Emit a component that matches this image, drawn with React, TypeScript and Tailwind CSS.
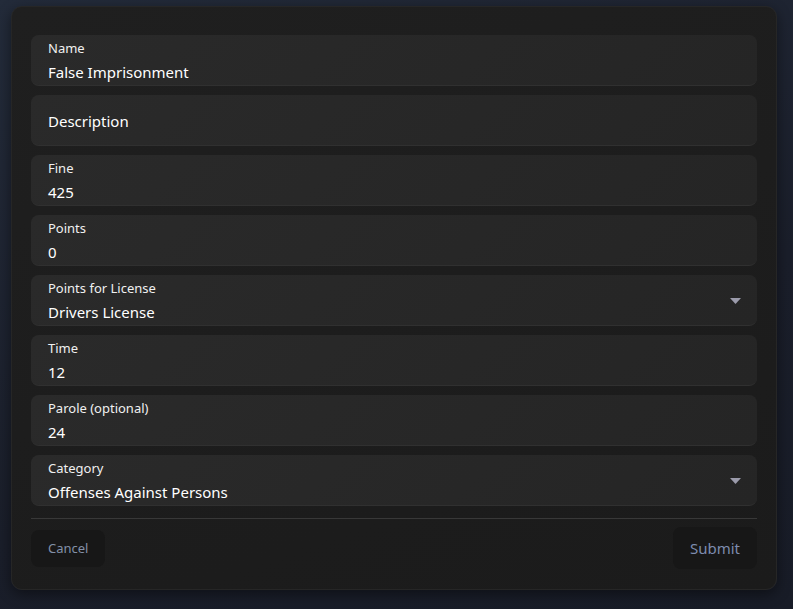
import React from "react";

interface FieldProps {
  label?: string;
  value: string;
  select?: boolean;
}

function Field({ label, value, select }: FieldProps) {
  return (
    <div
      className={`relative h-[51px] rounded-lg bg-[linear-gradient(135deg,#2a2a2a,#252525)] border-b border-[#303030] pl-[17px] pr-4 flex flex-col ${
        label ? "pt-[4px]" : "justify-center"
      }`}
    >
      {label && <div className="text-[13px] leading-[18px] text-[#f0f0f0]">{label}</div>}
      <div className={`text-[15px] leading-[22px] text-white ${label ? "mt-[4px]" : "mt-[1px]"}`}>{value}</div>
      {select && (
        <svg className="absolute right-[16px] top-[23px]" width="11" height="6" viewBox="0 0 11 6">
          <path d="M0 0h11L5.5 6z" fill="#9b9bab" />
        </svg>
      )}
    </div>
  );
}

const fields: FieldProps[] = [
  { label: "Name", value: "False Imprisonment" },
  { value: "Description" },
  { label: "Fine", value: "425" },
  { label: "Points", value: "0" },
  { label: "Points for License", value: "Drivers License", select: true },
  { label: "Time", value: "12" },
  { label: "Parole (optional)", value: "24" },
  { label: "Category", value: "Offenses Against Persons", select: true },
];

export default function App() {
  return (
    <div
      className="w-[793px] h-[609px] overflow-hidden bg-[linear-gradient(160deg,#232b3a,#1a1e2a_60%,#181c27)] pt-[6px] pl-[11px]"
      style={{ fontFamily: '"Noto Sans", "Open Sans", sans-serif' }}
    >
      <div className="w-[766px] h-[584px] rounded-[11px] border border-[#262626] bg-[linear-gradient(160deg,#1f1f1f,#1b1b1b)] shadow-[0_4px_14px_rgba(0,0,0,0.45)] px-[19px] pt-[28px]">
        <div className="flex flex-col gap-[9px]">
          {fields.map((f, i) => (
            <Field key={i} {...f} />
          ))}
        </div>
        <div className="mt-[12px] border-t border-[#383838]" />
        <div className="flex items-center justify-between pt-[8px]">
          <button className="h-[37px] px-[17px] pt-[2px] rounded-lg bg-[#171717] text-[13px] text-[#8390a8]">Cancel</button>
          <button className="h-[42px] px-[17px] rounded-lg bg-[#171717] text-[15px] text-[#7d8cae]">Submit</button>
        </div>
      </div>
    </div>
  );
}
